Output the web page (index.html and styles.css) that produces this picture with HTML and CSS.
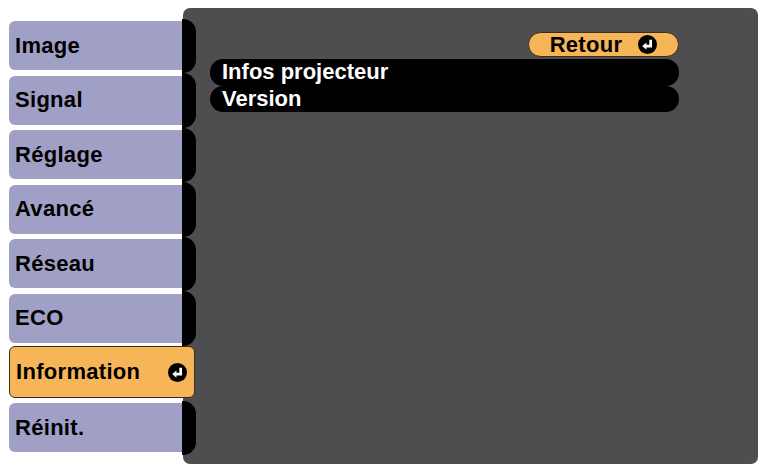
FILE: index.html
```html
<!DOCTYPE html>
<html lang="fr">
<head>
  <meta charset="UTF-8">
  <meta name="viewport" content="width=device-width, initial-scale=1.0">
  <link rel="stylesheet" href="styles.css">
</head>
<body>

<div class="screen">
  <!-- Left menu: one row per section, black tab sits on the panel edge -->
  <div class="menu">
    <div class="menu-row"><div class="menu-label">Image</div><div class="menu-tab"></div></div>
    <div class="menu-row"><div class="menu-label">Signal</div><div class="menu-tab"></div></div>
    <div class="menu-row"><div class="menu-label">Réglage</div><div class="menu-tab"></div></div>
    <div class="menu-row"><div class="menu-label">Avancé</div><div class="menu-tab"></div></div>
    <div class="menu-row"><div class="menu-label">Réseau</div><div class="menu-tab"></div></div>
    <div class="menu-row"><div class="menu-label">ECO</div><div class="menu-tab"></div></div>
    <div class="menu-row">
      <div class="menu-label active">
        <span>Information</span>
        <svg class="enter-icon" viewBox="0 0 18 18"><circle cx="9" cy="9" r="9" fill="#000"/><path d="M12 4.5 V10.5 H7" fill="none" stroke="#fff" stroke-width="2.6"/><path d="M4 10.5 L8 7 L8 14 Z" fill="#fff"/></svg>
      </div>
    </div>
    <div class="menu-row"><div class="menu-label">Réinit.</div><div class="menu-tab"></div></div>
  </div>

  <div class="panel">
    <div class="back-wrap">
      <div class="back-btn">
        <span>Retour</span>
        <svg class="enter-icon" viewBox="0 0 18 18"><circle cx="9" cy="9" r="9" fill="#000"/><path d="M12 4.5 V10.5 H7" fill="none" stroke="#fff" stroke-width="2.6"/><path d="M4 10.5 L8 7 L8 14 Z" fill="#fff"/></svg>
      </div>
    </div>
    <div class="item-row">Infos projecteur</div>
    <div class="item-row">Version</div>
  </div>
</div>

</body>
</html>
```

FILE: styles.css
```css
body {
  margin: 0;
  background: #fff;
  font-family: "Liberation Sans", Arial, sans-serif;
  font-weight: bold;
  font-size: 22px;
  overflow: hidden;
}

.screen {
  display: flex;
  align-items: flex-start;
  padding: 8px 0 0 9px;
}

.menu {
  width: 187px;
  margin-top: 10.5px;
  position: relative;
  z-index: 1;
}

.menu-row {
  display: flex;
  height: 54.6px;
}

.menu-label {
  width: 173px;
  height: 49px;
  margin-top: 2.5px;
  box-sizing: border-box;
  padding-left: 6px;
  display: flex;
  align-items: center;
  background: #a09fc5;
  color: #000;
  letter-spacing: 0.3px;
  border-radius: 6px 0 0 6px;
}

.menu-tab {
  width: 14px;
  height: 100%;
  background: #000;
  border-radius: 0 13px 13px 0;
}

.menu-label.active {
  width: 186px;
  height: 52px;
  margin-top: 0;
  padding-right: 7px;
  justify-content: space-between;
  background: #f6b556;
  border: 1px solid #3b2e18;
  border-radius: 6px;
}

.enter-icon {
  width: 19px;
  height: 19px;
  display: block;
}

.panel {
  width: 575px;
  height: 456px;
  margin-left: -13px;
  box-sizing: border-box;
  padding: 24px 79px 0 27px;
  background: #4e4e50;
  border-radius: 7px;
}

.back-wrap {
  display: flex;
  justify-content: flex-end;
  margin-bottom: 2px;
}

.back-btn {
  width: 151px;
  height: 25px;
  box-sizing: border-box;
  display: flex;
  align-items: center;
  justify-content: center;
  gap: 16px;
  background: #f6b556;
  border: 1px solid #3b2e18;
  border-radius: 13px;
  color: #000;
  letter-spacing: 0.3px;
}

.item-row {
  height: 26.5px;
  display: flex;
  align-items: center;
  padding-left: 12px;
  background: #000;
  color: #fff;
  border-radius: 13px;
}
```
